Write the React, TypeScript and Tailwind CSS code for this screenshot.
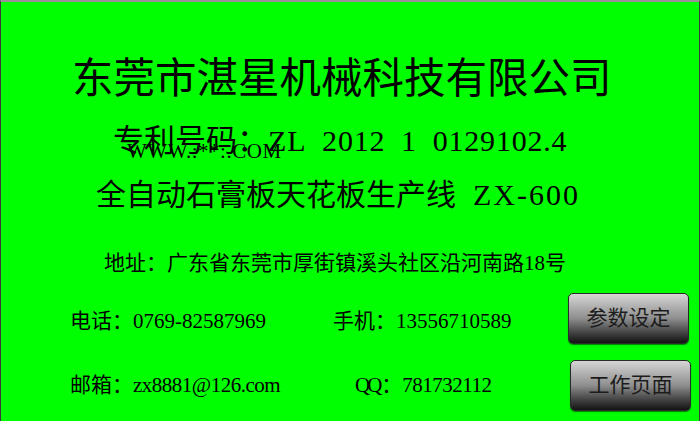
import React from "react";

const cjk = '"Liberation Serif", "Noto Sans CJK SC", serif';

function PanelButton({ label, className = "" }: { label: string; className?: string }) {
  return (
    <button
      className={`w-[121px] h-[51px] rounded-[5px] border border-[#2a2a2a] bg-gradient-to-b from-[#d6d6d6] via-[#8e8e8e] to-[#141414] text-[21px] text-[#1c1c1c] shadow-[0_1px_1px_rgba(0,0,0,0.5)] ${className}`}
      style={{ fontFamily: cjk }}
    >
      {label}
    </button>
  );
}

export default function App() {
  return (
    <div
      className="w-[700px] h-[421px] overflow-hidden bg-[#00ff00] text-black border-t-2 border-t-[#9c8c9c] border-x border-x-[#3a3a3a]"
      style={{ fontFamily: cjk }}
    >
      {/* Company name */}
      <div className="mt-[52px] h-[50px] pl-[71px] text-[41.5px] leading-[50px] whitespace-nowrap">
        东莞市湛星机械科技有限公司
      </div>

      {/* Patent number with watermark */}
      <div className="relative mt-[17px] h-[40px] pl-[112px] text-[31px] leading-[40px] whitespace-nowrap">
        专利号码：
        <span className="text-[30px] tracking-[0.8px]">
          ZL{"\u2002"}2012{"\u2002"}1{"\u2002"}0129102.4
        </span>
        <span
          className="absolute left-[126px] top-[20px] text-[21px] leading-[20px] tracking-[0.5px] text-black"
          style={{ fontFamily: '"Liberation Serif", serif' }}
        >
          WWW.:**:.COM
        </span>
      </div>

      {/* Product line */}
      <div className="mt-[14px] h-[40px] pl-[95px] text-[30px] leading-[40px] whitespace-nowrap">
        全自动石膏板天花板生产线
        <span className="tracking-[2px]">{"\u2002"}ZX-600</span>
      </div>

      {/* Address */}
      <div className="mt-[33px] h-[30px] pl-[103px] text-[21px] leading-[30px] whitespace-nowrap">
        地址：广东省东莞市厚街镇溪头社区沿河南路18号
      </div>

      {/* Phone row */}
      <div className="mt-[15px] h-[51px] flex items-center pl-[69px] text-[21px] whitespace-nowrap">
        <span className="w-[263px] pt-[6px]">电话：0769-82587969</span>
        <span className="w-[235px] pt-[6px]">手机：13556710589</span>
        <PanelButton label="参数设定" />
      </div>

      {/* Email row */}
      <div className="mt-[16px] h-[51px] flex items-center pl-[69px] text-[21px] whitespace-nowrap">
        <span className="w-[285px]">
          邮箱：<span className="tracking-[-0.5px]">zx8881@126.com</span>
        </span>
        <span className="w-[215px]">
          <span className="tracking-[-3px]">QQ</span>
          <span className="ml-[2px]">：</span>
          <span className="tracking-[-0.5px]">781732112</span>
        </span>
        <PanelButton label="工作页面" />
      </div>
    </div>
  );
}
